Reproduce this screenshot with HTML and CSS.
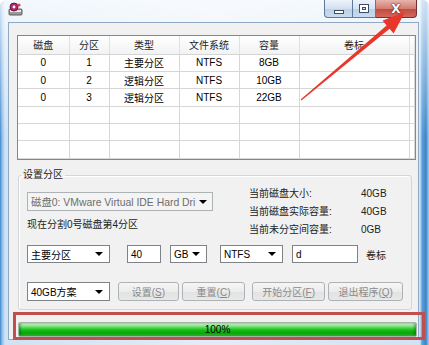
FILE: index.html
```html
<!DOCTYPE html>
<html lang="zh-CN">
<head>
    <meta charset="UTF-8">
    <meta name="viewport" content="width=device-width, initial-scale=1.0">
    <title>分区工具</title>
    <link rel="stylesheet" href="styles.css">
</head>
<body>

    <div class="window">
        <div class="titlebar">
            <span class="app-icon">
                <svg width="15" height="14" viewBox="0 0 15 14">
                    <rect x="1" y="7" width="13" height="6" rx="1" fill="#9a9a9a" stroke="#5c5c5c"/>
                    <rect x="2" y="8" width="11" height="2" fill="#e6e6e6"/>
                    <circle cx="6" cy="5" r="4" fill="#b0286e" stroke="#6a1444"/>
                    <circle cx="6" cy="5" r="1.4" fill="#fff"/>
                    <circle cx="11" cy="3" r="1.6" fill="#e04a4a"/>
                </svg>
            </span>
            <div class="caption-buttons">
                <span class="cap-btn min"><i></i></span>
                <span class="cap-btn max"><i></i></span>
                <span class="cap-btn close">X</span>
            </div>
        </div>

        <div class="client">
            <div class="list">
                <table>
                    <colgroup>
                        <col class="c-disk">
                        <col class="c-part">
                        <col class="c-type">
                        <col class="c-fs">
                        <col class="c-size">
                        <col class="c-label">
                        <col>
                    </colgroup>
                    <thead>
                        <tr><th>磁盘</th><th>分区</th><th>类型</th><th>文件系统</th><th>容量</th><th>卷标</th><th></th></tr>
                    </thead>
                    <tbody>
                        <tr><td>0</td><td>1</td><td>主要分区</td><td>NTFS</td><td>8GB</td><td></td><td></td></tr>
                        <tr><td>0</td><td>2</td><td>逻辑分区</td><td>NTFS</td><td>10GB</td><td></td><td></td></tr>
                        <tr><td>0</td><td>3</td><td>逻辑分区</td><td>NTFS</td><td>22GB</td><td></td><td></td></tr>
                        <tr><td></td><td></td><td></td><td></td><td></td><td></td><td></td></tr>
                        <tr><td></td><td></td><td></td><td></td><td></td><td></td><td></td></tr>
                        <tr><td></td><td></td><td></td><td></td><td></td><td></td><td></td></tr>
                        <tr><td></td><td></td><td></td><td></td><td></td><td></td><td></td></tr>
                    </tbody>
                </table>
            </div>

            <fieldset class="group">
                <legend>设置分区</legend>
                <div class="group-body">
                    <div class="group-top">
                        <div class="disk-side">
                            <div class="combo disabled disk"><span class="combo-text">磁盘0: VMware Virtual IDE Hard Dri</span><span class="caret"></span></div>
                            <p class="note">现在分割0号磁盘第4分区</p>
                        </div>
                        <dl class="info">
                            <dt>当前磁盘大小:</dt><dd>40GB</dd>
                            <dt>当前磁盘实际容量:</dt><dd>40GB</dd>
                            <dt>当前未分空间容量:</dt><dd>0GB</dd>
                        </dl>
                    </div>

                    <div class="field-row">
                        <div class="combo type">主要分区<span class="caret"></span></div>
                        <div class="edit size">40</div>
                        <div class="combo unit">GB<span class="caret"></span></div>
                        <div class="combo fs">NTFS<span class="caret"></span></div>
                        <div class="edit vol">d</div>
                        <span class="vol-text">卷标</span>
                    </div>

                    <div class="button-row">
                        <div class="combo plan">40GB方案<span class="caret"></span></div>
                        <button class="btn set">设置(<u>S</u>)</button>
                        <button class="btn reset">重置(<u>C</u>)</button>
                        <button class="btn start">开始分区(<u>F</u>)</button>
                        <button class="btn quit">退出程序(<u>Q</u>)</button>
                    </div>
                </div>
            </fieldset>

            <div class="progress">100%</div>
        </div>
    </div>

    <!-- red annotations drawn over the screenshot -->
    <div class="mark-box"></div>
    <svg class="mark-arrow" width="429" height="345" viewBox="0 0 429 345">
        <polygon points="300.6,99.5 386.6,25.4 382.6,20.6 405,12 393.6,33.6 389.6,28.8 301.4,100.5" fill="#e8362c"/>
    </svg>

</body>
</html>
```

FILE: styles.css
```css
/* basic page */
* {
    box-sizing: border-box;
}

body {
    margin: 0;
    width: 429px;
    height: 345px;
    overflow: hidden;
    position: relative;
    font-family: "Liberation Sans", "Noto Sans CJK SC", sans-serif;
    font-size: 10px;
    color: #000;
    background: #fff;
}

/* window frame (aero) */
.window {
    height: 345px;
    padding: 0 10px 5px 8px;
    display: flex;
    flex-direction: column;
    border-radius: 6px 6px 0 0;
    background:
        linear-gradient(to bottom, rgba(255, 255, 255, 0.75), rgba(255, 255, 255, 0) 40%),
        linear-gradient(to right, #3d86cb 0, #8cbde9 2px, #cfe3f5 5px, #e2edf8 50%, #cfe3f5 calc(100% - 9px), #5c9fdb calc(100% - 7px), #3b84c8 calc(100% - 3px), #a9cdee 100%);
}

.titlebar {
    height: 22px;
    display: flex;
    justify-content: space-between;
    align-items: flex-start;
}

.app-icon {
    margin-top: 2px;
    display: block;
    height: 14px;
}

.caption-buttons {
    display: flex;
    margin-right: 2px;
}

.cap-btn {
    height: 18px;
    display: flex;
    align-items: center;
    justify-content: center;
    border: 1px solid #5d7a9c;
    border-top: none;
    background: linear-gradient(to bottom, #eef4fb, #d3e1f0 50%, #bcd0e6 51%, #c9dbee);
}

.cap-btn.min {
    width: 28px;
    border-radius: 0 0 0 4px;
    border-right: none;
}

.cap-btn.max {
    width: 24px;
}

.cap-btn.min i {
    display: block;
    width: 10px;
    height: 4px;
    margin-top: 6px;
    background: #fff;
    border: 1px solid #3c4f66;
}

.cap-btn.max i {
    display: block;
    width: 10px;
    height: 9px;
    border: 1px solid #3c4f66;
    box-shadow: inset 0 0 0 2px #fff, inset 0 0 0 3px #3c4f66;
}

.cap-btn.close {
    width: 41px;
    border-left: none;
    border-color: #6e3434;
    border-radius: 0 0 4px 0;
    background: linear-gradient(to bottom, #e6b4ac, #d47d72 50%, #c2493d 51%, #d06a5c);
    color: #fff;
    font-family: "DejaVu Sans", sans-serif;
    font-weight: bold;
    font-size: 12px;
    text-shadow: 0 0 2px #4a1a1a, 0 0 1px #4a1a1a;
}

/* client area */
.client {
    flex: 1;
    background: #f1f1f1;
    border: 1px solid #8fa9c4;
    display: flex;
    flex-direction: column;
    align-items: flex-start;
}

/* partition list */
.list {
    margin: 12px 0 0 8px;
    width: 399px;
    height: 125px;
    overflow: hidden;
    border: 1px solid #828790;
    background: #fff;
}

.list table {
    width: 100%;
    border-collapse: collapse;
    table-layout: fixed;
}

.c-disk { width: 51px; }
.c-part { width: 40px; }
.c-type { width: 70px; }
.c-fs { width: 60px; }
.c-size { width: 60px; }
.c-label { width: 110px; }

.list th {
    height: 18px;
    padding: 0;
    font-weight: normal;
    color: #1e1e1e;
    background: linear-gradient(to bottom, #ffffff, #f1f2f4);
    border-right: 1px solid #e0e2e5;
    border-bottom: 1px solid #d5d5d5;
}

.list td {
    height: 17.4px;
    padding: 0;
    text-align: center;
    border: 1px solid #d7d7d7;
    border-top: none;
}

.list tr td:first-child {
    border-left: none;
}

/* group box */
.group {
    margin: 9px 0 0 9px;
    padding: 0;
    min-width: 0;
    width: 394px;
    border: 1px solid #d0d6da;
    border-radius: 3px;
    box-shadow: inset 1px 1px 0 #fff;
}

.group legend {
    margin-left: 2px;
    padding: 0 2px;
    line-height: 12px;
    color: #222;
}

.group-body {
    padding: 4px 8px 8px 8px;
}

.group-top {
    display: grid;
    grid-template-columns: 186px auto;
    column-gap: 36px;
}

.disk-side {
    padding-top: 7px;
}

.note {
    margin: 4px 0 0;
    line-height: 20px;
    color: #222;
}

.info {
    margin: 0;
    display: grid;
    grid-template-columns: 112px auto;
    line-height: 18px;
    color: #222;
}

.info dd {
    margin: 0;
}

/* controls */
.combo,
.edit {
    height: 18px;
    display: flex;
    align-items: center;
    padding-left: 3px;
    background: #fff;
    border: 1px solid #7f8286;
    white-space: nowrap;
}

.combo {
    justify-content: space-between;
    padding-right: 6px;
}

.combo-text {
    flex: 1;
}

.caret {
    flex: none;
    width: 0;
    height: 0;
    border-top: 4px solid #000;
    border-left: 4px solid transparent;
    border-right: 4px solid transparent;
}

.combo.disabled {
    background: #f4f4f4;
    border-color: #adb2b5;
    color: #6d6d6d;
}

.combo.disk {
    width: 186px;
    height: 19px;
    font-size: 10.4px;
    padding-right: 5px;
}

.field-row {
    margin-top: 6px;
    display: flex;
    align-items: center;
}

.combo.type { width: 83px; margin-right: 17px; }
.edit.size { width: 34px; margin-right: 9px; }
.combo.unit { width: 37px; margin-right: 13px; }
.combo.fs { width: 63px; margin-right: 9px; }
.edit.vol { width: 66px; margin-right: 8px; }

.vol-text {
    color: #222;
}

.button-row {
    margin-top: 19px;
    display: flex;
    align-items: center;
}

.combo.plan {
    width: 83px;
    height: 19px;
    margin-right: 8px;
}

.btn {
    height: 19px;
    padding: 0;
    font-family: inherit;
    font-size: 10px;
    color: #8a8a8a;
    border: 1px solid #adb2b5;
    border-radius: 3px;
    background: linear-gradient(to bottom, #f6f6f6, #ececec 50%, #e2e2e2 51%, #e8e8e8);
}

.btn.set { width: 62px; margin-right: 3px; }
.btn.reset { width: 63px; margin-right: 7px; }
.btn.start { width: 74px; margin-right: 3px; }
.btn.quit { width: 75px; }

/* progress */
.progress {
    margin: 12px 0 0 9px;
    width: 399px;
    height: 15px;
    line-height: 13px;
    text-align: center;
    border: 1px solid #a8b3a8;
    border-radius: 2px;
    background: linear-gradient(to bottom, #d4f6d4 0%, #8ee68e 22%, #2fcb2f 45%, #10b410 62%, #0aa60a 82%, #3bc63b 100%);
    box-shadow: inset 2px 0 2px rgba(0, 80, 0, 0.35), inset -2px 0 2px rgba(0, 80, 0, 0.35);
}

/* annotations */
.mark-box {
    position: absolute;
    left: 13px;
    top: 312px;
    width: 412px;
    height: 28px;
    border: 3px solid #c0504d;
}

.mark-arrow {
    position: absolute;
    left: 0;
    top: 0;
    pointer-events: none;
}
```
